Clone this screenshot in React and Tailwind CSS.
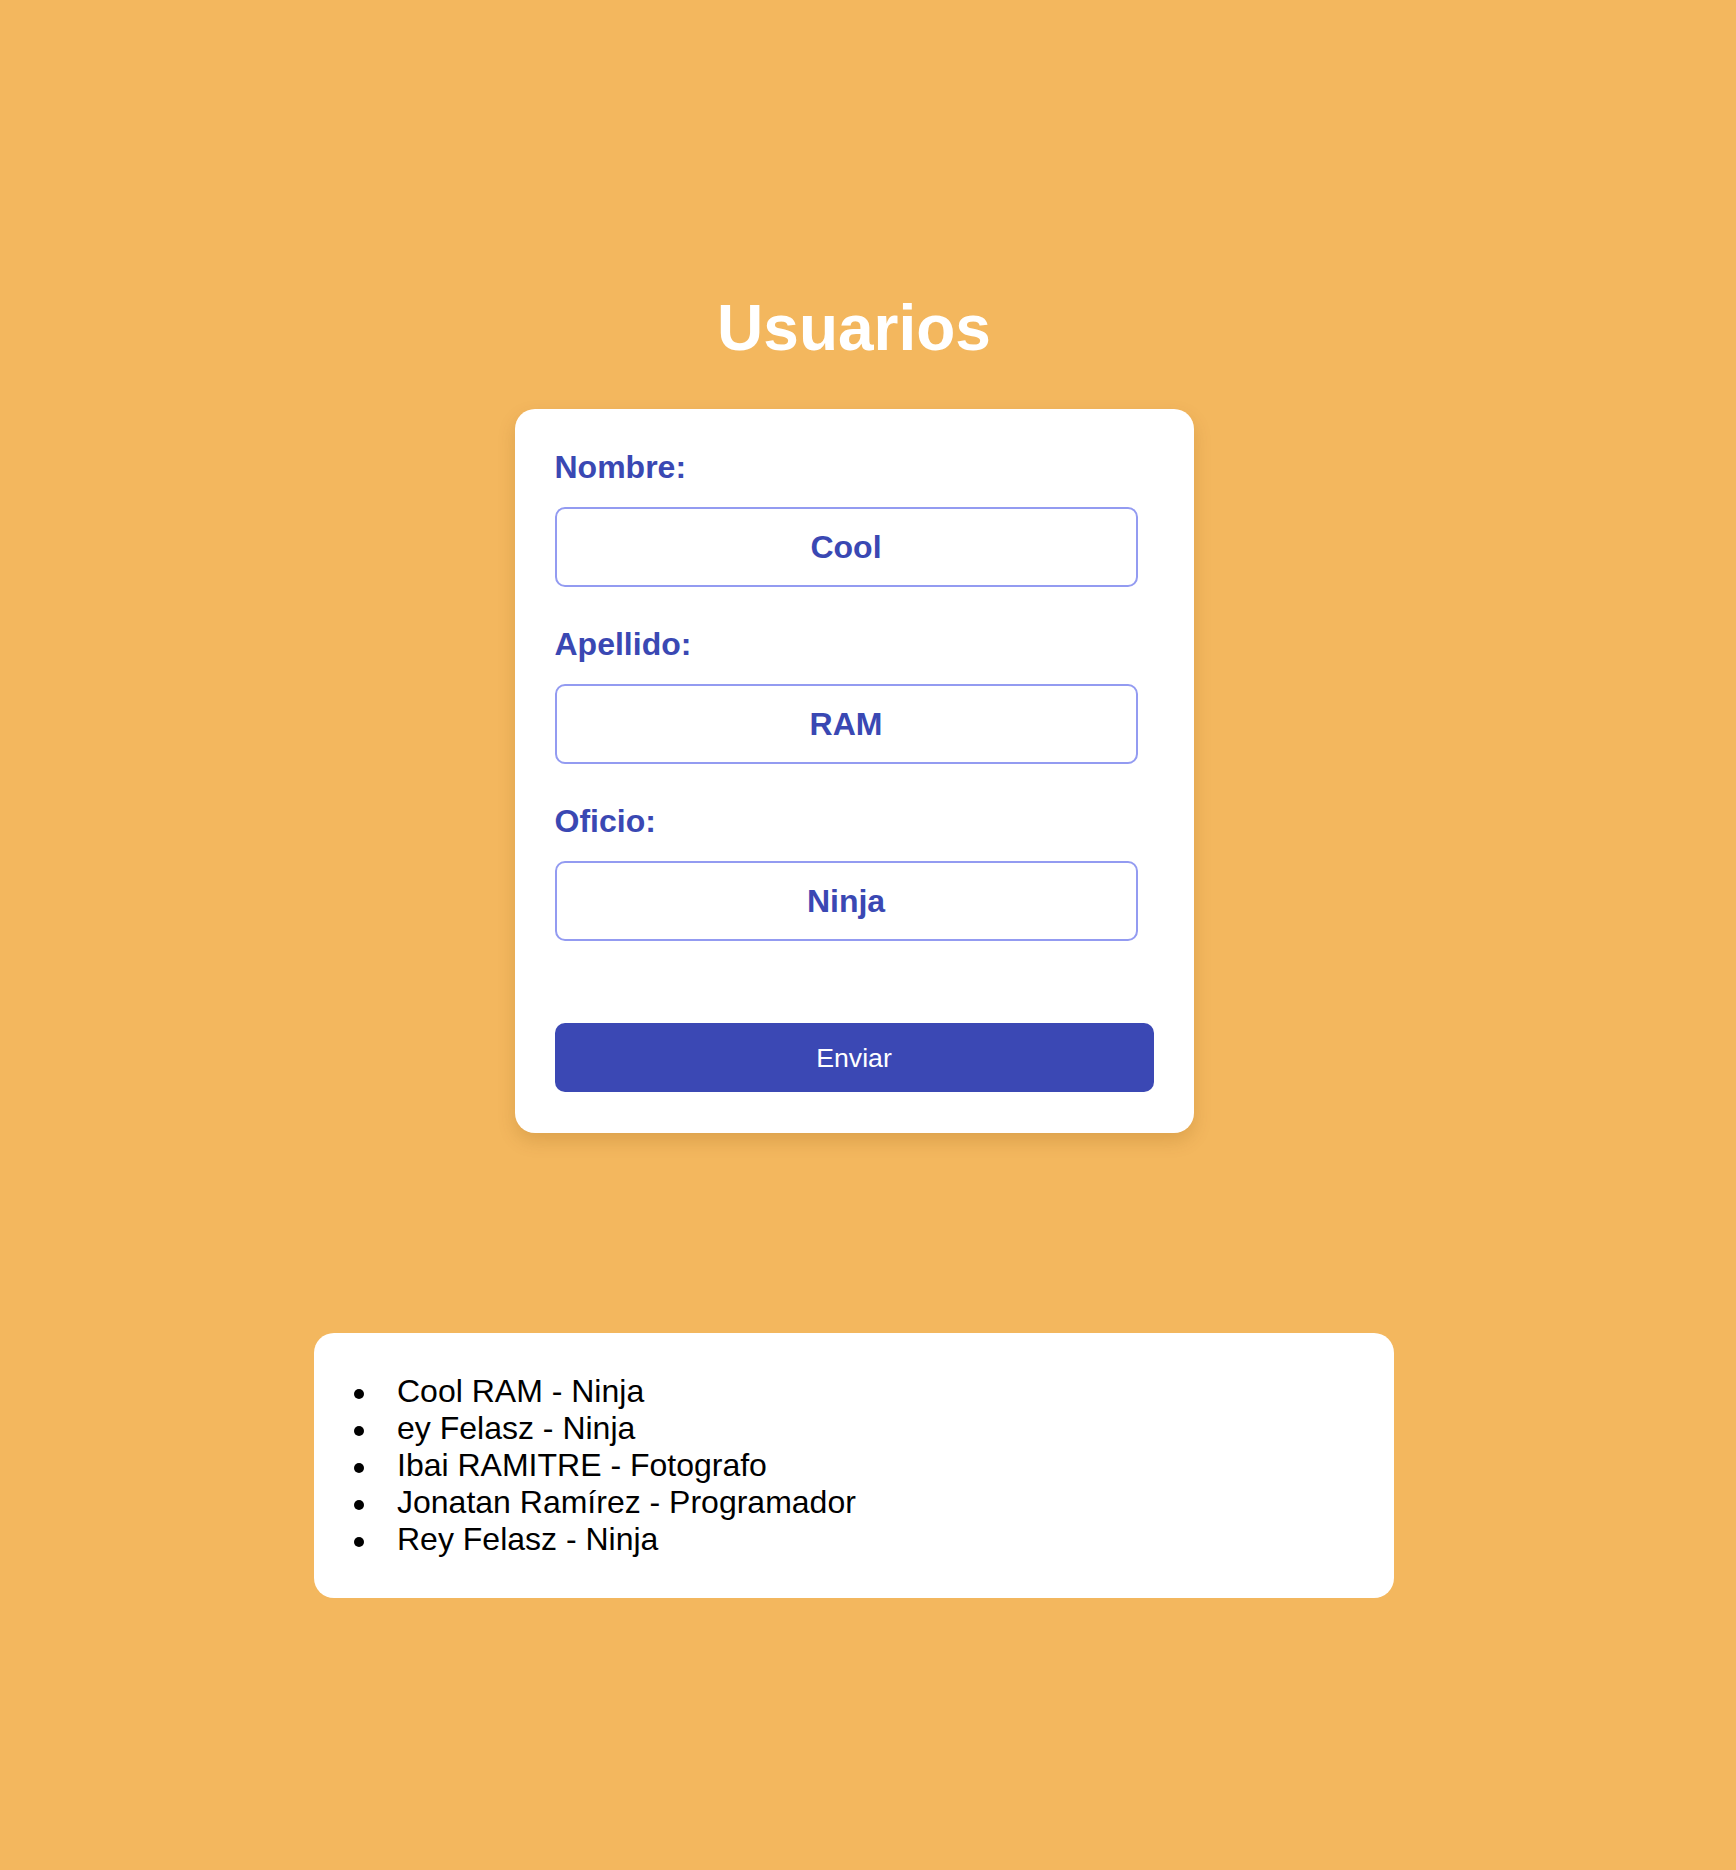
import { useState } from "react";

const initialUsers = [
  { nombre: "Cool", apellido: "RAM", oficio: "Ninja" },
  { nombre: "ey", apellido: "Felasz", oficio: "Ninja" },
  { nombre: "Ibai", apellido: "RAMITRE", oficio: "Fotografo" },
  { nombre: "Jonatan", apellido: "Ramírez", oficio: "Programador" },
  { nombre: "Rey", apellido: "Felasz", oficio: "Ninja" },
];

function Field({ label, value, onChange, first }) {
  return (
    <div className={first ? "" : "mt-[39px]"}>
      <label className="block text-[32px] leading-[37px] font-bold text-[#3a48b3]">
        {label}
      </label>
      <input
        type="text"
        value={value}
        onChange={(e) => onChange(e.target.value)}
        className="mt-[21px] block h-[80px] w-[583px] rounded-[10px] border-2 border-[#939bf1] bg-white text-center text-[32px] font-bold text-[#3a48b3] outline-none"
      />
    </div>
  );
}

export default function App() {
  const [users, setUsers] = useState(initialUsers);
  const [form, setForm] = useState({
    nombre: "Cool",
    apellido: "RAM",
    oficio: "Ninja",
  });

  const handleSubmit = (e) => {
    e.preventDefault();
    setUsers((prev) => [...prev, form]);
  };

  return (
    <div className="min-h-screen bg-[#f3b75e] font-['Liberation_Sans',Arial,sans-serif]">
      <div className="flex w-[1708px] flex-col items-center pt-[291px] pb-[200px]">
        <h1 className="text-[64px] leading-[74px] font-bold text-white">
          Usuarios
        </h1>

        {/* Form */}
        <form
          onSubmit={handleSubmit}
          className="mt-[44px] w-[679px] rounded-[20px] bg-white px-[40px] pt-[40px] pb-[41px] shadow-[0_8px_18px_rgba(120,70,0,0.18)]"
        >
          <Field
            first
            label="Nombre:"
            value={form.nombre}
            onChange={(v) => setForm({ ...form, nombre: v })}
          />
          <Field
            label="Apellido:"
            value={form.apellido}
            onChange={(v) => setForm({ ...form, apellido: v })}
          />
          <Field
            label="Oficio:"
            value={form.oficio}
            onChange={(v) => setForm({ ...form, oficio: v })}
          />

          <button
            type="submit"
            className="mt-[82px] block h-[69px] w-full rounded-[10px] bg-[#3b48b4] text-[26.67px] text-white"
          >
            Enviar
          </button>
        </form>

        {/* List */}
        <div className="mt-[200px] w-[1080px] rounded-[20px] bg-white py-[40px]">
          <ul className="pl-[40px] text-[32px] leading-[37px] text-black">
            {users.slice(0, 5).map((u, i) => (
              <li key={i} className="flex items-center">
                <span className="mr-[33px] h-[10px] w-[10px] translate-y-[2px] rounded-full bg-black" />
                <span>
                  {u.nombre} {u.apellido} - {u.oficio}
                </span>
              </li>
            ))}
          </ul>
        </div>
      </div>
    </div>
  );
}
